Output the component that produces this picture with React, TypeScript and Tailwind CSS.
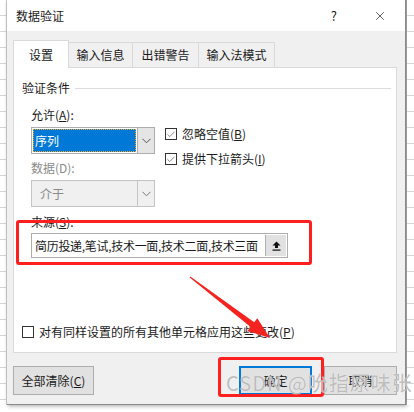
import { Check, X } from "lucide-react";

const font = "font-['Microsoft_YaHei','Noto_Sans_CJK_SC',sans-serif]";
const grid =
  "bg-[repeating-linear-gradient(to_bottom,#ffffff_0px,#ffffff_15px,#d6d6d6_15px,#d6d6d6_16px)]";

function CheckBox({ checked, label, hot }: { checked: boolean; label: string; hot: string }) {
  const [before, after] = label.split("_");
  return (
    <div className="flex items-center h-[16px] gap-[5px]">
      <span className="w-[12px] h-[12px] border border-[#333] bg-white flex items-center justify-center">
        {checked && <Check size={11} strokeWidth={1.4} className="text-[#333]" />}
      </span>
      <span className="text-[12px] leading-[16px] text-[#1a1a1a]">
        {before}(<span className="underline">{hot}</span>){after}
      </span>
    </div>
  );
}

function Chevron({ color }: { color: string }) {
  return (
    <svg width="9" height="6" viewBox="0 0 9 6">
      <path d="M0.5 0.8 L4.5 4.8 L8.5 0.8" fill="none" stroke={color} strokeWidth="1" />
    </svg>
  );
}

export default function App() {
  return (
    <div className={`relative w-[414px] h-[412px] overflow-hidden bg-white ${font}`}>
      <div className="flex h-[405px]">
        <div className={`w-[7px] ${grid} border-r border-[#cfcfcf]`} />
        <div className="w-[399px] flex flex-col border-r border-b border-[#8a8a8a] shadow-[1px_1px_4px_rgba(0,0,0,0.35)]">
          {/* title bar */}
          <div className="h-[31px] bg-white flex items-center pl-[9px] pr-[18px]">
            <span className="text-[12px] text-[#1a1a1a] flex-1">数据验证</span>
            <span className="text-[13px] text-[#1a1a1a] mr-[36px]">?</span>
            <X size={14} strokeWidth={1.2} className="text-[#1a1a1a]" />
          </div>
          {/* body */}
          <div className="flex-1 bg-[#f0f0f0] pl-[6px] pr-[8px] flex flex-col">
            <div className="flex items-end mt-[9px] h-[27px] text-[12px] text-[#1a1a1a]">
              <div className="w-[56px] h-[28px] bg-white border border-b-0 border-[#d9d9d9] flex items-center justify-center relative top-[1px]">
                设置
              </div>
              <div className="w-[64px] h-[25px] border border-l-0 border-b-0 border-[#d9d9d9] flex items-center justify-center">
                输入信息
              </div>
              <div className="w-[66px] h-[25px] border border-l-0 border-b-0 border-[#d9d9d9] flex items-center justify-center">
                出错警告
              </div>
              <div className="w-[76px] h-[25px] border border-l-0 border-b-0 border-[#d9d9d9] flex items-center justify-center">
                输入法模式
              </div>
            </div>
            {/* panel */}
            <div className="h-[286px] w-[384px] bg-white border border-[#d9d9d9] flex flex-col text-[12px] leading-[16px] text-[#1a1a1a]">
              <div className="flex items-center mt-[12px] pl-[8px] pr-[5px]">
                <span>验证条件</span>
                <div className="flex-1 h-px bg-[#dcdcdc] ml-[5px]" />
              </div>
              <div className="flex pl-[17px]">
                <div className="w-[124px] flex flex-col">
                  <div className="mt-[11px]">
                    允许(<span className="underline">A</span>):
                  </div>
                  <div className="mt-[4px] h-[27px] flex border border-[#adadad] bg-white">
                    <div className="flex-1 m-px bg-[#0078d7] border border-dotted border-[#f5a623] text-white flex items-center pl-[1px]">
                      序列
                    </div>
                    <div className="w-[17px] bg-[#e5e5e5] border-l border-[#adadad] flex items-center justify-center">
                      <Chevron color="#555" />
                    </div>
                  </div>
                  <div className="mt-[6px] text-[#8a8a8a]">数据(D):</div>
                  <div className="mt-[4px] h-[27px] flex border border-[#c4c4c4] bg-[#f0f0f0] text-[#8a8a8a]">
                    <div className="flex-1 flex items-center pl-[8px]">介于</div>
                    <div className="w-[17px] border-l border-[#c4c4c4] flex items-center justify-center">
                      <Chevron color="#777" />
                    </div>
                  </div>
                </div>
                <div className="flex flex-col ml-[10px] mt-[30px] gap-[9px]">
                  <CheckBox checked label="忽略空值_" hot="B" />
                  <CheckBox checked label="提供下拉箭头_" hot="I" />
                </div>
              </div>
              <div className="pl-[17px] mt-[7px]">
                来源(<span className="underline">S</span>):
              </div>
              <div className="ml-[17px] mt-[3px] w-[257px] h-[25px] flex border border-[#adadad] bg-white">
                <div className="flex-1 flex items-center pl-[3px] whitespace-nowrap overflow-hidden tracking-[-0.3px]">
                  简历投递,笔试,技术一面,技术二面,技术三面
                </div>
                <div className="w-[21px] shrink-0 m-px bg-[#e1e1e1] border-l border-[#adadad] flex items-center justify-center">
                  <svg width="9" height="10" viewBox="0 0 9 10">
                    <path d="M4.5 0.5 L8.5 4.5 L6 4.5 L6 7 L3 7 L3 4.5 L0.5 4.5 Z" fill="#111" />
                    <rect x="0.5" y="8.5" width="8" height="1.2" fill="#111" />
                  </svg>
                </div>
              </div>
              <div className="pl-[8px] mt-[66px]">
                <CheckBox checked={false} label="对有同样设置的所有其他单元格应用这些更改_" hot="P" />
              </div>
            </div>
            {/* buttons */}
            <div className="flex mt-[13px] text-[12px] text-[#1a1a1a]">
              <button className="w-[81px] h-[29px] bg-[#e1e1e1] border border-[#adadad]">
                全部清除(<span className="underline">C</span>)
              </button>
              <div className="flex-1" />
              <button className="w-[73px] h-[29px] bg-[#e1e1e1] border-2 border-[#0078d7]">确定</button>
              <button className="w-[73px] h-[29px] ml-[12px] bg-[#e1e1e1] border border-[#adadad]">取消</button>
            </div>
          </div>
        </div>
        <div className={`w-[8px] ${grid} border-l border-[#9a9a9a]`} />
      </div>
      <div className={`h-[7px] ${grid}`} />

      {/* annotations */}
      <div className="absolute left-[16px] top-[220px] w-[296px] h-[45px] border-[3px] border-[#ff1f1f] rounded-[3px]" />
      <div className="absolute left-[218px] top-[357px] w-[106px] h-[40px] border-[3px] border-[#ff1f1f] rounded-[3px]" />
      <svg className="absolute left-0 top-0" width="414" height="412">
        <polygon
          points="190.3,276.6 254.2,322.2 257.3,318.2 270,338 247.5,331 250.6,327 189.7,277.4"
          fill="#f5231f"
        />
      </svg>
      <div className="absolute left-[226px] top-[370px] text-[20px] leading-[26px] tracking-[1px] text-[#a8a8a8]/75 whitespace-nowrap [text-shadow:0_0_1px_#ffffff]">
        CSDN @吮指原味张
      </div>
    </div>
  );
}
